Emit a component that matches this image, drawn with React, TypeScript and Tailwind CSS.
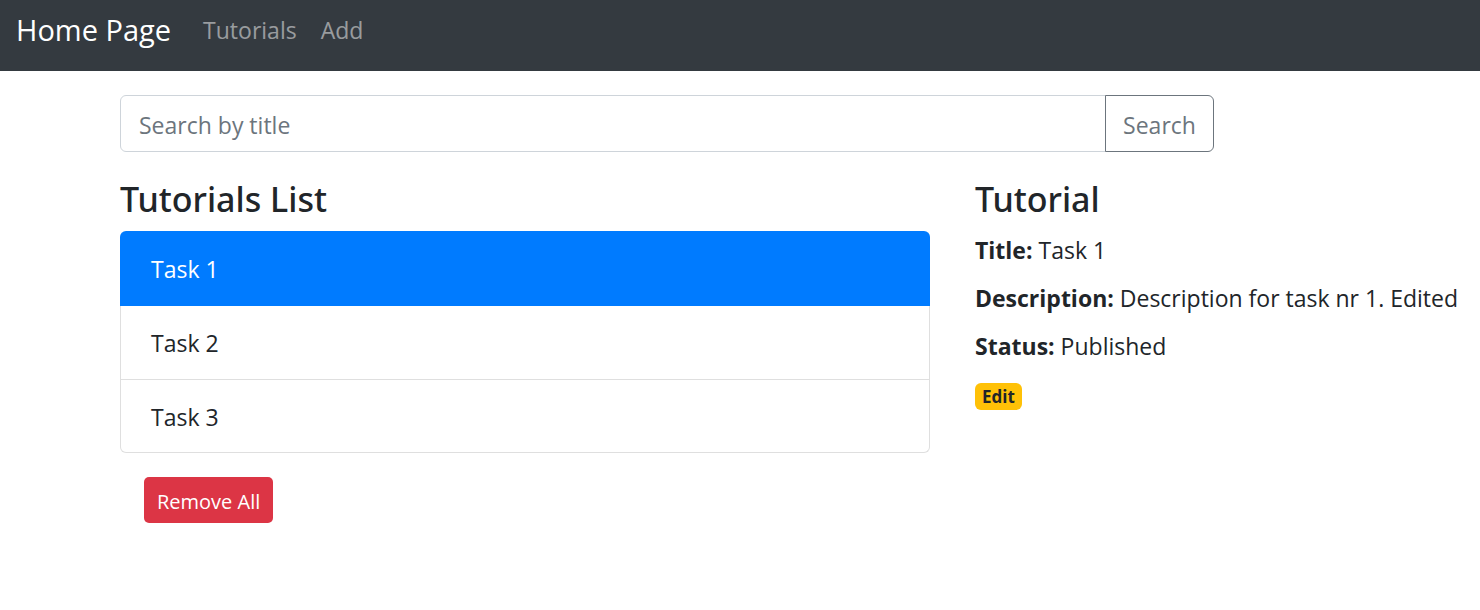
const tasks = ["Task 1", "Task 2", "Task 3"];

export default function App() {
  return (
    <div className="min-h-screen bg-white font-['Open_Sans','Noto_Sans',sans-serif] text-[23px] leading-9 text-[#212529]">
      <nav className="flex h-[71px] items-start bg-[#343a40] px-4 pt-3">
        <a href="#home" className="text-[29px] text-white">Home Page</a>
        <div className="ml-8 flex gap-6 text-white/50">
          <a href="#tutorials">Tutorials</a>
          <a href="#add">Add</a>
        </div>
      </nav>
      <main className="pl-[120px] pt-6">
        <form className="mr-[266px] flex h-[57px]" onSubmit={(e) => e.preventDefault()}>
          <input
            type="text"
            aria-label="Search by title"
            placeholder="Search by title"
            className="min-w-0 flex-1 rounded-l-md border border-[#ced4da] px-[18px] pt-0.5 outline-none placeholder:text-[#6c757d]"
          />
          <button type="submit" className="-ml-px w-[109px] rounded-r-md border border-[#6c757d] pt-0.5 text-[#6c757d]">
            Search
          </button>
        </form>
        <div className="flex items-start gap-[45px] pt-[26px]">
          <section className="min-w-0 flex-1">
            <h4 className="mb-2.5 font-['Noto_Sans','Open_Sans',sans-serif] text-[34px] leading-[43px] font-medium">Tutorials List</h4>
            <ul>
              {tasks.map((task, i) => (
                <li
                  key={task}
                  className={
                    i === 0
                      ? "h-[75px] rounded-t-md bg-[#007bff] px-[31px] pt-5 text-white"
                      : "h-[74px] border border-t-0 border-[#dfdfdf] px-[30px] pt-[19px] last:h-[73px] last:rounded-b-md"
                  }
                >
                  {task}
                </li>
              ))}
            </ul>
            <button type="button" className="mt-6 ml-6 h-[46px] rounded-[5px] bg-[#dc3545] px-[13px] pt-1 text-xl leading-8 text-white">
              Remove All
            </button>
          </section>
          <section className="w-[505px] shrink-0">
            <h4 className="mb-[11px] font-['Noto_Sans','Open_Sans',sans-serif] text-[34px] leading-[43px] font-medium">Tutorial</h4>
            <div className="flex flex-col gap-3">
              <p><strong>Title:</strong> Task 1</p>
              <p><strong>Description:</strong> Description for task nr 1. Edited</p>
              <p><strong>Status:</strong> Published</p>
            </div>
            <a href="#edit" className="mt-[19px] flex h-[27px] w-[47px] items-center justify-center rounded-md bg-[#ffc107] text-[17px] font-bold">Edit</a>
          </section>
        </div>
      </main>
    </div>
  );
}
